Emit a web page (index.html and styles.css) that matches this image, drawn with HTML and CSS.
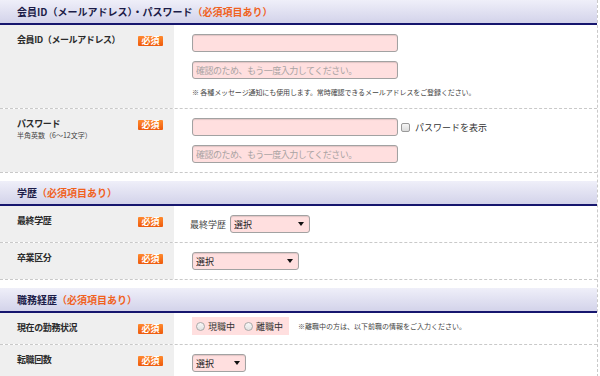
FILE: index.html
```html
<!DOCTYPE html>
<html lang="ja">
<head>
    <meta charset="UTF-8">
    <meta name="viewport" content="width=device-width, initial-scale=1.0">
    <title>会員登録</title>
    <link rel="stylesheet" href="styles.css">
</head>
<body>
    <div class="entry-form">
        <!-- アカウント -->
        <h2 class="section-title">会員ID（メールアドレス）・パスワード<span class="required-note">（必須項目あり）</span></h2>

        <div class="form-row">
            <div class="form-label">
                <div class="label-text">会員ID（メールアドレス）</div>
                <span class="badge">必須</span>
            </div>
            <div class="form-field">
                <input type="text" class="text-input">
                <input type="text" class="text-input" placeholder="確認のため、もう一度入力してください。">
                <p class="field-note">※ 各種メッセージ通知にも使用します。常時確認できるメールアドレスをご登録ください。</p>
            </div>
        </div>

        <div class="form-row">
            <div class="form-label">
                <div class="label-text">
                    パスワード
                    <small class="label-sub">半角英数（6〜12文字）</small>
                </div>
                <span class="badge">必須</span>
            </div>
            <div class="form-field">
                <div class="inline-group">
                    <input type="password" class="text-input">
                    <label class="check-label"><input type="checkbox" class="check">パスワードを表示</label>
                </div>
                <input type="text" class="text-input" placeholder="確認のため、もう一度入力してください。">
            </div>
        </div>

        <!-- 学歴 -->
        <h2 class="section-title">学歴<span class="required-note">（必須項目あり）</span></h2>

        <div class="form-row">
            <div class="form-label">
                <div class="label-text">最終学歴</div>
                <span class="badge">必須</span>
            </div>
            <div class="form-field">
                <div class="inline-group">
                    <span class="inline-caption">最終学歴</span>
                    <span class="select-box select-md"><select><option>選択</option></select></span>
                </div>
            </div>
        </div>

        <div class="form-row">
            <div class="form-label">
                <div class="label-text">卒業区分</div>
                <span class="badge">必須</span>
            </div>
            <div class="form-field">
                <span class="select-box select-lg"><select><option>選択</option></select></span>
            </div>
        </div>

        <!-- 職務経歴 -->
        <h2 class="section-title">職務経歴<span class="required-note">（必須項目あり）</span></h2>

        <div class="form-row">
            <div class="form-label">
                <div class="label-text">現在の勤務状況</div>
                <span class="badge">必須</span>
            </div>
            <div class="form-field compact">
                <div class="inline-group">
                    <div class="radio-box">
                        <label class="radio-label"><input type="radio" name="status" class="radio">現職中</label>
                        <label class="radio-label"><input type="radio" name="status" class="radio">離職中</label>
                    </div>
                    <span class="side-note">※離職中の方は、以下前職の情報をご入力ください。</span>
                </div>
            </div>
        </div>

        <div class="form-row">
            <div class="form-label">
                <div class="label-text">転職回数</div>
                <span class="badge">必須</span>
            </div>
            <div class="form-field">
                <span class="select-box select-sm"><select><option>選択</option></select></span>
            </div>
        </div>
    </div>
</body>
</html>
```

FILE: styles.css
```css
:root {
    --navy: #16166e;
    --title-text: #1c1c48;
    --orange: #f0621e;
    --label-bg: #efefef;
    --line: #c9c9c9;
    --input-bg: #ffdfdf;
    --input-border: #a2a2a2;
    --text: #333333;
}

* {
    margin: 0;
    padding: 0;
    box-sizing: border-box;
}

body {
    font-family: "Noto Sans CJK JP", "Noto Sans", sans-serif;
    color: var(--text);
    background: #ffffff;
    font-size: 9px;
}

.entry-form {
    width: 598px;
    border-right: 1px dashed var(--line);
}

.section-title {
    height: 25px;
    padding-left: 17px;
    font-size: 10px;
    font-weight: bold;
    line-height: 23px;
    color: var(--title-text);
    background: linear-gradient(#efeff9, #d3d3ea);
    border-bottom: 2px solid var(--navy);
    margin-top: 8px;
}

.section-title:first-child {
    margin-top: 0;
}

.required-note {
    color: var(--orange);
}

.form-row {
    display: grid;
    grid-template-columns: 174px 1fr;
    border-bottom: 1px dashed var(--line);
}

.form-label {
    display: flex;
    justify-content: space-between;
    align-items: flex-start;
    background: var(--label-bg);
    padding: 9px 11px 9px 17px;
}

.label-text {
    font-size: 9px;
    letter-spacing: -0.4px;
    line-height: 12px;
    font-weight: bold;
    color: #2a2a2a;
}

.label-sub {
    display: block;
    font-size: 7px;
    letter-spacing: 0;
    line-height: 10px;
    font-weight: normal;
    color: #444;
}

.badge {
    display: inline-block;
    width: 25px;
    height: 10px;
    margin-top: 2px;
    font-size: 9px;
    line-height: 10px;
    font-weight: bold;
    text-align: center;
    color: #ffffff;
    background: linear-gradient(#ff8a2e, #ee5a0c);
    border-radius: 1px;
}

.form-field {
    display: flex;
    flex-direction: column;
    align-items: flex-start;
    gap: 9px;
    padding: 9px 0 9px 18px;
}

.form-field.compact {
    padding-top: 4px;
}

.text-input {
    width: 206px;
    height: 18px;
    padding: 0 3px;
    font-family: inherit;
    font-size: 9px;
    letter-spacing: -0.5px;
    background: var(--input-bg);
    border: 1px solid var(--input-border);
    border-radius: 3px;
    box-shadow: inset 0 1px 1px rgba(0, 0, 0, 0.12);
    outline: none;
}

.text-input::placeholder {
    color: #a9a3a3;
}

.field-note {
    font-size: 7px;
    letter-spacing: -0.1px;
    line-height: 11px;
    color: #444;
    margin-top: -1px;
    margin-bottom: 1px;
}

.inline-group {
    display: flex;
    align-items: center;
    gap: 3px;
}

.check-label {
    display: flex;
    align-items: center;
    gap: 5px;
    font-size: 9px;
    color: #333;
}

.check {
    appearance: none;
    width: 9px;
    height: 9px;
    border: 1px solid #9a9a9a;
    border-radius: 2px;
    background: linear-gradient(#f6f6f6, #dcdcdc);
}

.inline-caption {
    font-size: 9px;
    color: #444;
    margin-left: -2px;
    margin-right: 1px;
}

.select-box {
    position: relative;
    display: inline-block;
    height: 18px;
}

.select-box select {
    appearance: none;
    width: 100%;
    height: 100%;
    padding: 0 3px;
    font-family: inherit;
    font-size: 9px;
    color: #222;
    background: var(--input-bg);
    border: 1px solid var(--input-border);
    border-radius: 3px;
    box-shadow: inset 0 1px 1px rgba(0, 0, 0, 0.12);
    outline: none;
}

.select-box::after {
    content: "";
    position: absolute;
    right: 6px;
    top: 7px;
    border-left: 3px solid transparent;
    border-right: 3px solid transparent;
    border-top: 4px solid #111;
    pointer-events: none;
}

.select-sm {
    width: 54px;
}

.select-md {
    width: 80px;
}

.select-lg {
    width: 107px;
}

.radio-box {
    display: flex;
    align-items: center;
    gap: 9px;
    height: 18px;
    padding: 0 6px 0 4px;
    background: var(--input-bg);
}

.radio-label {
    display: flex;
    align-items: center;
    gap: 3px;
    font-size: 9px;
    color: #333;
}

.radio {
    appearance: none;
    width: 9px;
    height: 9px;
    border: 1px solid #a8a8a8;
    border-radius: 50%;
    background: linear-gradient(#f8f8f8, #e2e2e2);
}

.side-note {
    font-size: 7px;
    color: #444;
    margin-left: 6px;
}
```
